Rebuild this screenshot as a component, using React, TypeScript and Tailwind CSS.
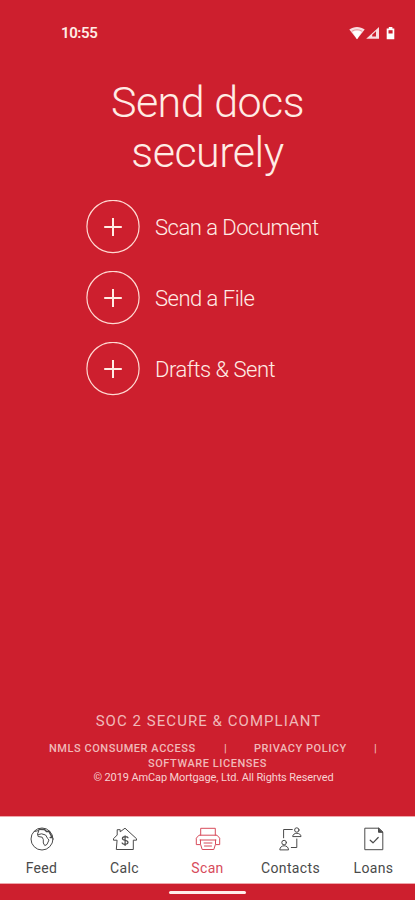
import type { ReactNode } from 'react';

const actions = ['Scan a Document', 'Send a File', 'Drafts & Sent'];

function StatusIcons() {
  return (
    <svg width="48" height="16" viewBox="0 0 48 16" fill="#fff">
      <path d="M0.3 4.6C4.8 1 11.2 1 15.7 4.6L8 14.3Z" opacity=".85" />
      <path d="M3.7 7L8 14.3L12.3 7C9.8 5.2 6.2 5.2 3.7 7Z" />
      <path d="M2.7 6.4C6 4.2 10 4.2 13.3 6.4" fill="none" stroke="#e58a90" strokeWidth=".8" />
      <path d="M17.2 13.8L30 2V13.8Z" opacity=".85" />
      <path d="M23.2 11.6V9.8L27 6.2V11.6Z" fill="#cd1f2e" />
      <path d="M39.8 2h3.6v1.4h1.9v10.9h-7.6V3.4h2.1Z" />
      <path d="M39.5 5.2h4.1v3.3h-4.1Z" fill="#cd1f2e" />
    </svg>
  );
}

function PlusCircle() {
  return (
    <svg width="54" height="54" viewBox="0 0 54 54" fill="none" stroke="#ffd9d2">
      <circle cx="27" cy="26.5" r="26.1" strokeWidth="1.2" />
      <path d="M18.2 27h17.6M27 18v18" stroke="#ffece5" strokeWidth="2" />
    </svg>
  );
}

function Icon({ children }: { children: ReactNode }) {
  return (
    <svg
      width="26"
      height="26"
      viewBox="0 0 26 26"
      fill="none"
      stroke="currentColor"
      strokeWidth="1"
      strokeLinejoin="round"
      strokeLinecap="round"
    >
      {children}
    </svg>
  );
}

const tabs = [
  {
    label: 'Feed',
    icon: (
      <Icon>
        <circle cx="13" cy="13" r="11" />
        <path d="M5.5 5.5L10 4.5L8.5 8L9.2 10.5L13.2 11.2L14.3 13.5V17L15.8 19.6L18 18.4L20 14L18.6 12.4L16.6 9L12.5 7.8L9.5 8.6" />
        <path d="M10 3.2L15.5 3.4L17.5 5.5H20.5M20.5 6.5L23.2 11.5H21.2" strokeWidth="1.5" />
      </Icon>
    ),
  },
  {
    label: 'Calc',
    icon: (
      <Icon>
        <path d="M4.7 14.2H1.5V12.7L5.2 9V3.7H8.2V5.8L13 2.2L24.5 12.7V14.2H21.3V23.5H4.7Z" />
        <path d="M16 11.8C15.2 10.2 10.4 10.2 10.4 12.6C10.4 15.1 16 13.7 16 16.3C16 18.8 11 18.8 10.1 17M13.1 9.8V19.4" strokeWidth="1.2" />
      </Icon>
    ),
  },
  {
    label: 'Scan',
    icon: (
      <Icon>
        <path d="M5.7 9.2V2.3H20.3V9.2M4.7 18.6H1.3V12.2L4 9.2H22L24.7 12.2V18.6H21.3M5 14H21M5.5 14V18.2L7.2 23.5H18.8L20.5 18.2V14M9 17H17M9.5 20H16.5" />
      </Icon>
    ),
  },
  {
    label: 'Contacts',
    icon: (
      <Icon>
        <path d="M5.6 11.8V3.5H14.3M18.8 13V21.5H13.3" />
        <circle cx="18.8" cy="4" r="2.2" />
        <path d="M14.7 10.2C14.7 6.2 23 6.2 23 10.2Z" />
        <circle cx="6.1" cy="16.6" r="2.3" />
        <path d="M1.8 23.5C1.8 18.4 10.5 18.4 10.5 23.5Z" />
      </Icon>
    ),
  },
  {
    label: 'Loans',
    icon: (
      <Icon>
        <path d="M4.2 2.2H17.7L21.8 6.2V23.7H4.2Z" />
        <path d="M17.5 2.4V6.3H21.6Z" fill="currentColor" />
        <path d="M9.2 14.2L12 16.8L17.2 11.5" strokeWidth="1.2" />
      </Icon>
    ),
  },
];

export default function App() {
  return (
    <div className="flex h-[900px] w-[415px] flex-col overflow-hidden bg-[#cd1f2e] font-['Roboto',sans-serif] text-[#ffece5]">
      <header className="flex h-[66px] items-center justify-between pr-[18px] pl-[61px]">
        <span className="text-[15px] font-semibold tracking-[-0.4px]">10:55</span>
        <StatusIcons />
      </header>

      <h1 className="mt-[11px] text-center text-[43px] leading-[50px] font-light tracking-[-0.5px]">
        Send docs
        <br />
        securely
      </h1>

      <ul className="mt-[23px] ml-[86px] flex flex-col gap-[17px]">
        {actions.map((action) => (
          <li key={action} className="flex h-[54px] items-center gap-[15px]">
            <PlusCircle />
            <span className="pt-[2px] text-[22px] leading-[54px] font-light tracking-[-0.5px] whitespace-nowrap">
              {action}
            </span>
          </li>
        ))}
      </ul>

      <footer className="mt-auto flex flex-col items-center text-[#f0b9b9]">
        <p className="pl-[2px] text-[15px] leading-[20px] tracking-[1.05px]">SOC 2 SECURE &amp; COMPLIANT</p>
        <div className="mt-[10px] flex self-start pl-[49px] text-[11px] leading-[15px] font-medium tracking-[0.55px] whitespace-nowrap">
          <span className="w-[175px]">NMLS CONSUMER ACCESS</span>
          <span className="w-[30px]">|</span>
          <span className="w-[120px]">PRIVACY POLICY</span>
          <span>|</span>
        </div>
        <p className="text-[11px] leading-[15px] font-medium tracking-[0.55px]">SOFTWARE LICENSES</p>
        <p className="pl-[12px] text-[11px] leading-[14px] tracking-[-0.12px] text-[#f7d2d2]">
          © 2019 AmCap Mortgage, Ltd. All Rights Reserved
        </p>
      </footer>

      <nav className="mt-[31px] grid h-[68px] shrink-0 grid-cols-5 border-y border-[#efa6ab] bg-white">
        {tabs.map(({ label, icon }) => (
          <div
            key={label}
            className={`flex flex-col items-center pt-[9px] ${label === 'Scan' ? 'text-[#d74b5b]' : 'text-[#4a4a4a]'}`}
          >
            {icon}
            <span className="mt-[6px] text-[14px] leading-[20px] tracking-[0.35px]">{label}</span>
          </div>
        ))}
      </nav>
      <div className="flex h-[16px] shrink-0 justify-center pt-[7px]">
        <div className="h-[3px] w-[77px] rounded-full bg-[#ffeeeb]" />
      </div>
    </div>
  );
}
